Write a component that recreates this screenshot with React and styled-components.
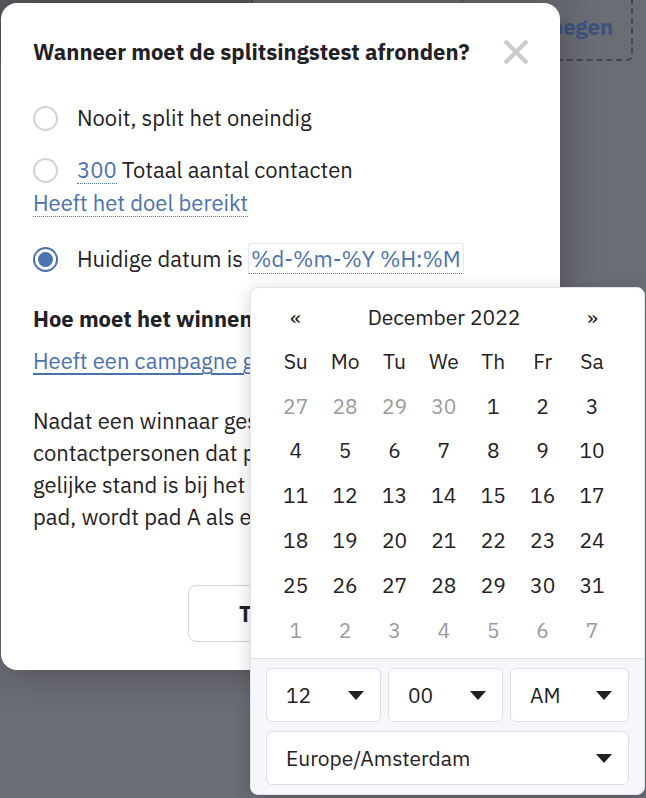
import React from 'react';
import styled, { createGlobalStyle } from 'styled-components';

const Global = createGlobalStyle`
  html, body { margin:0; padding:0; }
  body { background:#6b6d74; font-family:"IBM Plex Sans","Noto Sans",sans-serif; color:#1f2126; }
  #root { width:646px; height:798px; position:relative; overflow:hidden; }
`;

const Backdrop = styled.div`
  width:646px; height:798px; position:relative; background:#6b6d74;
`;

const TopBar = styled.div`
  display:flex; align-items:flex-start; height:62px;
`;

const SideCol = styled.div`
  width:252px; height:62px; border-right:1px solid #3e3f45; background:#5a5b61;
`;

const GhostButton = styled.div`
  margin-left:auto; margin-right:13px; height:53px; padding:0 18px 6px 40px; display:flex; align-items:center;
  border:2px dashed #45474e; border-top:none; border-radius:0 0 6px 6px;
  color:#3a5480; font-weight:700; font-size:22px;
`;

const Modal = styled.div`
  position:absolute; left:1px; top:3px; width:559px; height:667px; box-sizing:border-box;
  background:#fff; border-radius:16px; padding:34px 32px 0 32px;
  box-shadow:0 0 40px rgba(0,0,0,0.3);
  display:flex; flex-direction:column;
`;

const TitleRow = styled.div`
  display:flex; align-items:center; justify-content:space-between; height:30px;
`;

const Title = styled.h2`
  margin:0; font-size:22px; font-weight:700; line-height:30px; white-space:nowrap; color:#1f2126;
`;

const Close = styled.button`
  border:none; background:none; padding:0; margin-right:-1px; width:26px; height:26px; cursor:pointer; display:flex;
`;

const Options = styled.div`
  display:flex; flex-direction:column; margin-top:35px;
`;

const Option = styled.label`
  display:flex; align-items:center; gap:19px; height:32px; font-size:22px; line-height:32px; white-space:nowrap;
  margin-top:${p=>p.mt || 0}px;
`;

const Radio = styled.span`
  width:25px; height:25px; box-sizing:border-box; border-radius:50%; flex:none;
  border:2px solid ${p=>p.checked ? '#4a72b0' : '#d2d2d2'};
  display:flex; align-items:center; justify-content:center;
  &::after{ content:''; width:15px; height:15px; border-radius:50%; background:${p=>p.checked ? '#4a72b0' : 'transparent'}; }
`;

const Dotted = styled.span`
  color:#4a72b0; border-bottom:1px dotted #4a72b0; line-height:27px; display:inline-block;
`;

const SubLink = styled.div`
  margin-top:1px; height:32px; font-size:22px; line-height:32px;
`;

const DateField = styled.span`
  display:inline-block; color:#4a72b0; border:1px solid #e3e8f1; border-bottom:1px dotted #4a72b0;
  border-radius:4px 4px 0 0; padding:0 2px; line-height:29px;
`;

const Section = styled.div`
  margin-top:29px;
`;

const UnderLink = styled.a`
  display:block; margin-top:12px; font-size:22px; line-height:30px; color:#4a72b0; text-decoration:underline; text-underline-offset:4px; white-space:nowrap;
`;

const Para = styled.p`
  margin:29px 0 0; font-size:22px; line-height:32px; white-space:nowrap;
`;

const Footer = styled.div`
  margin-top:auto; margin-bottom:28px; display:flex; gap:12px; padding-left:155px;
`;

const Btn = styled.button`
  height:57px; width:${p=>p.w}px; border-radius:8px; font-family:inherit; font-size:22px; font-weight:700;
  border:1px solid ${p=>p.primary ? '#4a72b0' : '#d2d4e2'};
  background:${p=>p.primary ? '#4a72b0' : '#fff'}; color:${p=>p.primary ? '#fff' : '#1f2126'};
`;

const Popover = styled.div`
  position:absolute; left:250px; top:287px; width:395px; height:508px; box-sizing:border-box;
  background:#fff; border:1px solid #e2e4ec; border-radius:8px; overflow:hidden;
  box-shadow:0 4px 18px rgba(0,0,0,0.18);
  display:flex; flex-direction:column; font-size:21px; color:#1f2126;
`;

const CalHead = styled.div`
  display:grid; grid-template-columns:49.4px 1fr 49.4px; align-items:center; height:34px;
  margin:13px 27px 0 20px;
  span{ text-align:center; }
`;

const Grid = styled.div`
  display:grid; grid-template-columns:repeat(7, 49.4px); grid-auto-rows:44.8px; align-items:center;
  margin:5px 27px 6px 20px;
`;

const Cell = styled.span`
  text-align:center; color:${p=>p.muted ? '#9b9b9b' : '#1f2126'};
`;

const TimeBox = styled.div`
  margin-top:auto; background:#f6f7fb; border-top:1px solid #e1e3ea; padding:9px 15px 9px 15px;
  display:grid; grid-template-columns:115px 115px 1fr; gap:9px 7px;
`;

const Select = styled.div`
  height:54px; box-sizing:border-box; background:#fff; border:1px solid #dcdfe8; border-radius:6px;
  display:flex; align-items:center; justify-content:space-between; padding:0 16px 0 19px;
  grid-column:${p=>p.full ? '1 / -1' : 'auto'};
`;

const Caret = () => (
  <svg width="16" height="9" viewBox="0 0 16 9"><path d="M0 0h16L8 9z" fill="#1f2126"/></svg>
);

const XIcon = () => (
  <svg width="26" height="26" viewBox="0 0 26 26"><path d="M2 2l22 22M24 2L2 24" stroke="#cbcbcb" strokeWidth="4.2"/></svg>
);

const weeks = [
  [[27,1],[28,1],[29,1],[30,1],[1],[2],[3]],
  [[4],[5],[6],[7],[8],[9],[10]],
  [[11],[12],[13],[14],[15],[16],[17]],
  [[18],[19],[20],[21],[22],[23],[24]],
  [[25],[26],[27],[28],[29],[30],[31]],
  [[1,1],[2,1],[3,1],[4,1],[5,1],[6,1],[7,1]],
];

export default function App(){
  return (
    <Backdrop>
      <Global/>
      <TopBar>
        <SideCol/>
        <GhostButton>Toevoegen</GhostButton>
      </TopBar>

      <Modal>
        <TitleRow>
          <Title>Wanneer moet de splitsingstest afronden?</Title>
          <Close aria-label="Sluiten"><XIcon/></Close>
        </TitleRow>

        <Options>
          <Option><Radio/>Nooit, split het oneindig</Option>
          <Option mt={20}><Radio/><span><Dotted>300</Dotted> Totaal aantal contacten</span></Option>
          <SubLink><Dotted>Heeft het doel bereikt</Dotted></SubLink>
          <Option mt={24}><Radio checked/><span>Huidige datum is <DateField>%d-%m-%Y %H:%M</DateField></span></Option>
        </Options>

        <Section>
          <Title>Hoe moet het winnende pad worden gekozen?</Title>
          <UnderLink>Heeft een campagne geopend</UnderLink>
          <Para>
            Nadat een winnaar geselecteerd is, gaan alle<br/>
            contactpersonen dat pad in. Als er een<br/>
            gelijke stand is bij het einde van het<br/>
            pad, wordt pad A als een winnaar gekozen.
          </Para>
        </Section>

        <Footer>
          <Btn w={160}>Terug</Btn>
          <Btn w={168} primary>Opslaan</Btn>
        </Footer>
      </Modal>

      <Popover>
        <CalHead><span>«</span><span>December 2022</span><span>»</span></CalHead>
        <Grid>
          {['Su','Mo','Tu','We','Th','Fr','Sa'].map(d => <Cell key={d}>{d}</Cell>)}
          {weeks.flat().map(([n,m], i) => <Cell key={i} muted={!!m}>{n}</Cell>)}
        </Grid>
        <TimeBox>
          <Select>12<Caret/></Select>
          <Select>00<Caret/></Select>
          <Select>AM<Caret/></Select>
          <Select full>Europe/Amsterdam<Caret/></Select>
        </TimeBox>
      </Popover>
    </Backdrop>
  );
}
